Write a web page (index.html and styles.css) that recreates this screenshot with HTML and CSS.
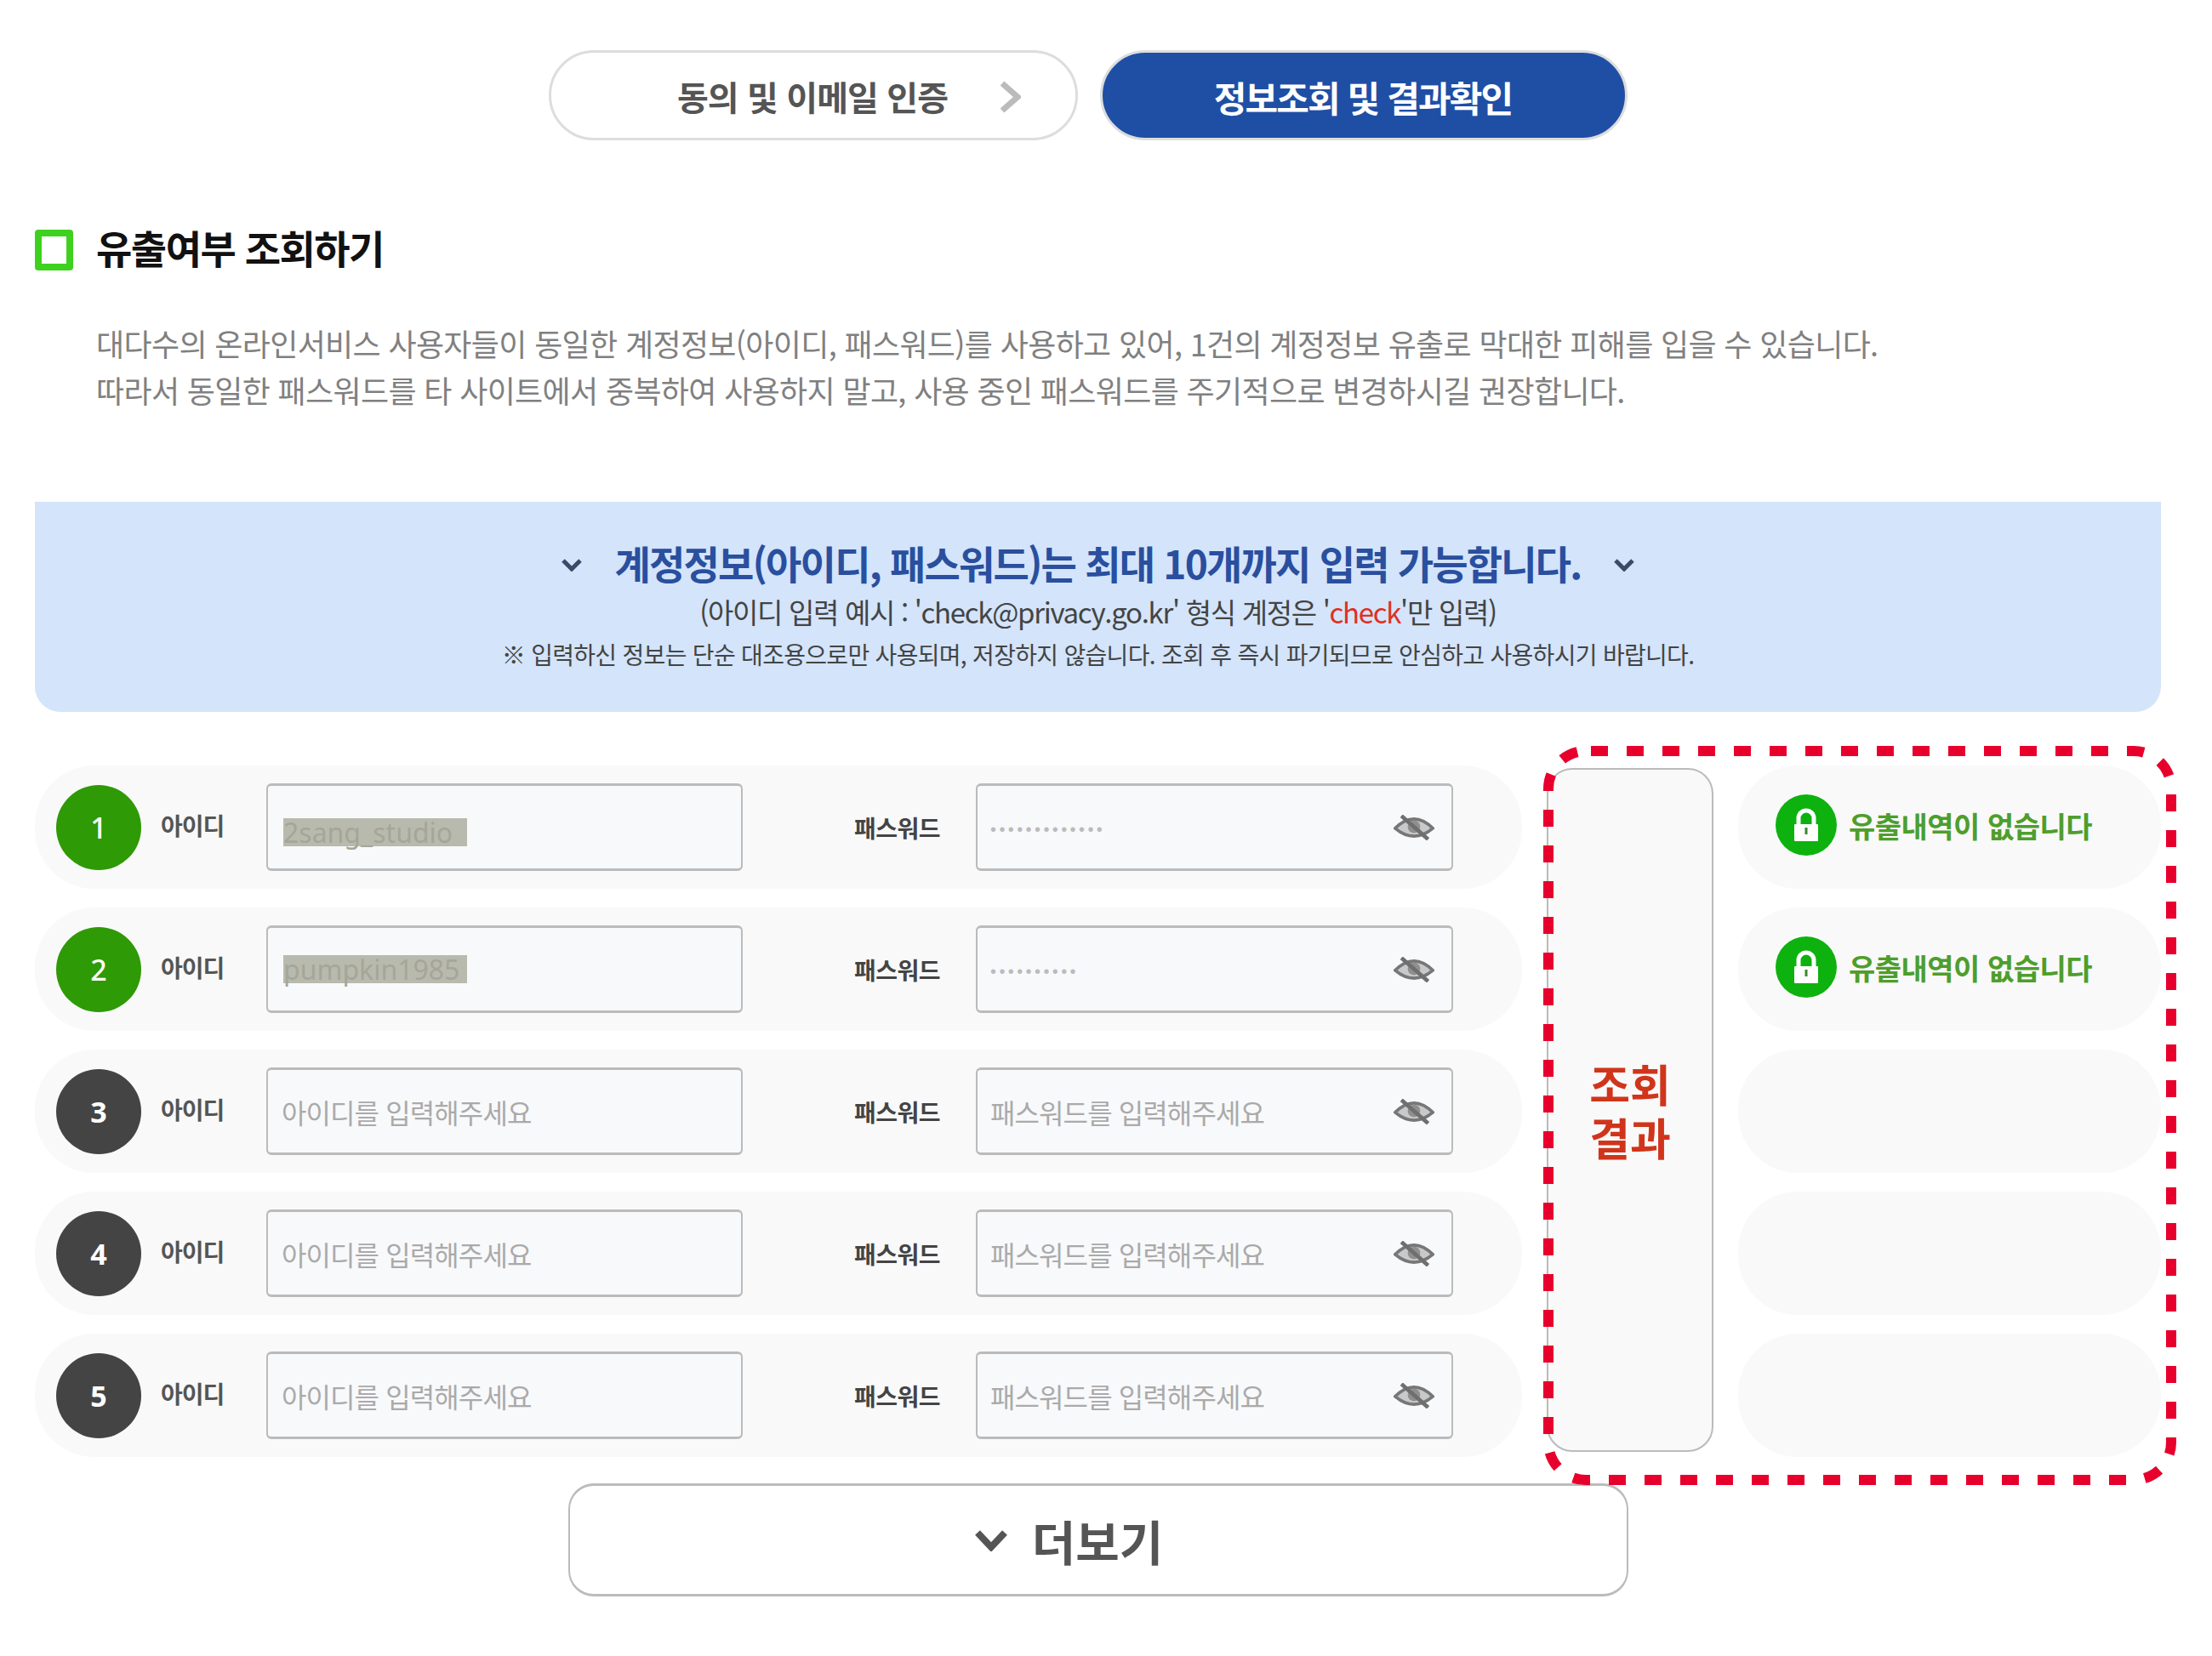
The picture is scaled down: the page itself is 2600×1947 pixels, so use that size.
FILE: index.html
```html
<!DOCTYPE html>
<html lang="ko">
<head>
    <meta charset="UTF-8">
    <title>유출여부 조회하기</title>
    <link rel="stylesheet" href="styles.css">
</head>
<body>
    <div class="steps">
        <div class="step">
            <span>동의 및 이메일 인증</span>
            <svg class="step-arrow" viewBox="0 0 26 38"><path d="M4 3 L22 19 L4 35"/></svg>
        </div>
        <div class="step step-active"><span>정보조회 및 결과확인</span></div>
    </div>

    <div class="section-title">
        <i class="title-mark"></i>
        <h2>유출여부 조회하기</h2>
    </div>
    <p class="desc">대다수의 온라인서비스 사용자들이 동일한 계정정보(아이디, 패스워드)를 사용하고 있어, 1건의 계정정보 유출로 막대한 피해를 입을 수 있습니다.<br>따라서 동일한 패스워드를 타 사이트에서 중복하여 사용하지 말고, 사용 중인 패스워드를 주기적으로 변경하시길 권장합니다.</p>

    <div class="notice">
        <div class="notice-title">
            <svg class="notice-arrow" viewBox="0 0 26 16"><path d="M3 3 L13 13 L23 3"/></svg>
            <strong>계정정보(아이디, 패스워드)는 최대 10개까지 입력 가능합니다.</strong>
            <svg class="notice-arrow" viewBox="0 0 26 16"><path d="M3 3 L13 13 L23 3"/></svg>
        </div>
        <p class="notice-sub">(아이디 입력 예시 : 'check@privacy.go.kr' 형식 계정은 '<em>check</em>'만 입력)</p>
        <p class="notice-note">※ 입력하신 정보는 단순 대조용으로만 사용되며, 저장하지 않습니다. 조회 후 즉시 파기되므로 안심하고 사용하시기 바랍니다.</p>
    </div>

    <div class="lookup">
        <div class="account-list">
            <div class="account-row">
                <span class="num num-done">1</span>
                <label class="id-label">아이디</label>
                <div class="field id-field"><span class="masked masked-low">2sang_studio</span></div>
                <label class="pw-label">패스워드</label>
                <div class="field pw-field">
                    <span class="dots">•••••••••••••</span>
                    <svg class="eye" viewBox="0 0 52 32"><use href="#eye-off"/></svg>
                </div>
            </div>
            <div class="account-row">
                <span class="num num-done">2</span>
                <label class="id-label">아이디</label>
                <div class="field id-field"><span class="masked">pumpkin1985</span></div>
                <label class="pw-label">패스워드</label>
                <div class="field pw-field">
                    <span class="dots">••••••••••</span>
                    <svg class="eye" viewBox="0 0 52 32"><use href="#eye-off"/></svg>
                </div>
            </div>
            <div class="account-row">
                <span class="num">3</span>
                <label class="id-label">아이디</label>
                <div class="field id-field"><span class="holder">아이디를 입력해주세요</span></div>
                <label class="pw-label">패스워드</label>
                <div class="field pw-field">
                    <span class="holder">패스워드를 입력해주세요</span>
                    <svg class="eye" viewBox="0 0 52 32"><use href="#eye-off"/></svg>
                </div>
            </div>
            <div class="account-row">
                <span class="num">4</span>
                <label class="id-label">아이디</label>
                <div class="field id-field"><span class="holder">아이디를 입력해주세요</span></div>
                <label class="pw-label">패스워드</label>
                <div class="field pw-field">
                    <span class="holder">패스워드를 입력해주세요</span>
                    <svg class="eye" viewBox="0 0 52 32"><use href="#eye-off"/></svg>
                </div>
            </div>
            <div class="account-row">
                <span class="num">5</span>
                <label class="id-label">아이디</label>
                <div class="field id-field"><span class="holder">아이디를 입력해주세요</span></div>
                <label class="pw-label">패스워드</label>
                <div class="field pw-field">
                    <span class="holder">패스워드를 입력해주세요</span>
                    <svg class="eye" viewBox="0 0 52 32"><use href="#eye-off"/></svg>
                </div>
            </div>
        </div>

        <div class="result-head">조회<br>결과</div>

        <div class="result-list">
            <div class="result-row">
                <svg class="lock" viewBox="0 0 72 72"><use href="#lock-ok"/></svg>
                <span>유출내역이 없습니다</span>
            </div>
            <div class="result-row">
                <svg class="lock" viewBox="0 0 72 72"><use href="#lock-ok"/></svg>
                <span>유출내역이 없습니다</span>
            </div>
            <div class="result-row"></div>
            <div class="result-row"></div>
            <div class="result-row"></div>
        </div>

        <!-- red dashed callout over the result columns -->
        <svg class="callout" viewBox="0 0 744 869"><rect x="6" y="6" width="732" height="857" rx="44" ry="44"/></svg>
    </div>

    <div class="more-btn">
        <svg class="more-arrow" viewBox="0 0 40 26"><path d="M4 4 L20 21 L36 4"/></svg>
        <span>더보기</span>
    </div>

    <svg class="defs" width="0" height="0">
        <defs>
            <g id="eye-off">
                <path d="M2 17 Q26 -7 50 17 Q26 37 2 17 Z" fill="#c9c9c9" stroke="#777" stroke-width="4"/>
                <circle cx="26" cy="15" r="8" fill="#8f8f8f"/>
                <path d="M10 1 L44 31" stroke="#6f6f6f" stroke-width="5"/>
            </g>
            <g id="lock-ok">
                <circle cx="36" cy="36" r="36" fill="#0db20f"/>
                <path d="M27 36 V28 A9 9 0 0 1 45 28 V36" fill="none" stroke="#fff" stroke-width="5"/>
                <rect x="22" y="35" width="28" height="20" rx="1" fill="#fff"/>
                <rect x="34.5" y="39" width="3" height="8" fill="#3b8a2e"/>
            </g>
        </defs>
    </svg>
</body>
</html>
```
FILE: styles.css
```css
* {
    box-sizing: border-box;
    margin: 0;
    padding: 0;
}

body {
    width: 2600px;
    height: 1947px;
    overflow: hidden;
    background: #fff;
    font-family: "Noto Sans CJK KR", "Noto Sans", sans-serif;
    color: #444;
}

.steps {
    display: flex;
    gap: 26px;
    margin: 59px 0 0 645px;
}

.step {
    position: relative;
    display: flex;
    align-items: center;
    justify-content: center;
    width: 622px;
    height: 106px;
    padding: 2px 2px 0 0;
    border: 3px solid #ddd;
    border-radius: 53px;
    font-size: 40px;
    font-weight: 700;
    letter-spacing: -0.9px;
    color: #555;
}

.step-active {
    width: 620px;
    background: #1f4fa5;
    color: #fff;
    font-size: 42px;
    letter-spacing: -1.9px;
}

.step-arrow {
    position: absolute;
    left: 526px;
    top: 33px;
    width: 26px;
    height: 38px;
}

.step-arrow path {
    fill: none;
    stroke: #bbb;
    stroke-width: 7;
}

.section-title {
    display: flex;
    align-items: center;
    gap: 27px;
    height: 48px;
    margin: 105px 0 0 41px;
}

.title-mark {
    width: 45px;
    height: 48px;
    border: 8px solid #3fd11f;
    border-radius: 4px;
}

.section-title h2 {
    margin-top: -8px;
    font-size: 46px;
    letter-spacing: -1.5px;
    color: #111;
}

.desc {
    margin: 58px 0 0 113px;
    font-size: 36px;
    line-height: 55px;
    letter-spacing: -0.66px;
    color: #808080;
    white-space: nowrap;
}

.notice {
    width: 2499px;
    height: 247px;
    margin: 104px 0 0 41px;
    padding-top: 35px;
    background: #d3e4fb;
    border-radius: 0 0 30px 30px;
    text-align: center;
}

.notice-title {
    display: flex;
    align-items: center;
    justify-content: center;
    gap: 37px;
    height: 72px;
}

.notice-title strong {
    font-size: 46px;
    letter-spacing: -1.8px;
    color: #2a4f9e;
}

.notice-arrow {
    width: 26px;
    height: 16px;
    margin-top: 6px;
}

.notice-arrow path {
    fill: none;
    stroke: #3b4a66;
    stroke-width: 5;
}

.notice-sub {
    height: 44px;
    font-size: 33px;
    line-height: 45px;
    letter-spacing: -1.33px;
    color: #444;
}

.notice-sub em {
    font-style: normal;
    color: #e0301e;
}

.notice-note {
    height: 56px;
    font-size: 28px;
    line-height: 56px;
    letter-spacing: -0.7px;
    color: #444;
}

.lookup {
    position: relative;
    display: flex;
    gap: 29px;
    margin: 63px 0 0 41px;
}

.account-list,
.result-list {
    display: flex;
    flex-direction: column;
    gap: 22px;
}

.account-row {
    display: flex;
    align-items: center;
    width: 1748px;
    height: 145px;
    padding-left: 25px;
    background: #f9f9f9;
    border-radius: 70px;
}

.num {
    display: flex;
    align-items: center;
    justify-content: center;
    width: 100px;
    height: 100px;
    margin-right: 23px;
    background: #444;
    border-radius: 50%;
    font-family: "Noto Sans", sans-serif;
    font-size: 34px;
    font-weight: 700;
    color: #fff;
}

.num-done {
    background: #2e9a05;
    font-weight: 500;
}

.id-label {
    width: 124px;
    margin-top: -5px;
    font-size: 28px;
    font-weight: 700;
    letter-spacing: -1px;
    color: #555;
}

.pw-label {
    width: 232px;
    margin-right: 42px;
    text-align: right;
    font-size: 28px;
    font-weight: 700;
    letter-spacing: -0.5px;
    color: #444;
}

.field {
    position: relative;
    display: flex;
    align-items: center;
    height: 103px;
    background: #f8f9fb;
    border: 2px solid #bbb;
    border-top-width: 3px;
    border-bottom-width: 3px;
    border-radius: 6px;
}

.id-field {
    width: 560px;
    padding-left: 16px;
}

.pw-field {
    width: 561px;
    padding-left: 15px;
}

.holder {
    font-size: 32px;
    letter-spacing: -0.9px;
    color: #aaa;
}

.masked {
    width: 216px;
    height: 33px;
    margin-left: 2px;
    background: #b9baae;
    font-family: "Noto Sans", sans-serif;
    font-size: 32px;
    line-height: 33px;
    white-space: nowrap;
    color: #a5a698;
}

.masked-low {
    margin-top: 12px;
}

.dots {
    margin-top: 5px;
    font-family: "Liberation Sans", sans-serif;
    font-size: 20px;
    letter-spacing: 3.4px;
    color: #bbb;
}

.eye {
    position: absolute;
    right: 20px;
    top: 34px;
    width: 48px;
    height: 30px;
}

.result-head {
    display: flex;
    align-items: center;
    justify-content: center;
    width: 196px;
    height: 804px;
    margin-top: 3px;
    background: #f9f9f9;
    border: 2px solid #bbb;
    border-radius: 30px;
    text-align: center;
    font-size: 52px;
    font-weight: 700;
    line-height: 63px;
    color: #d0351b;
}

.result-row {
    display: flex;
    align-items: center;
    gap: 14px;
    width: 497px;
    height: 145px;
    padding: 0 0 5px 44px;
    background: #f9f9f9;
    border-radius: 70px;
    font-size: 34px;
    font-weight: 700;
    letter-spacing: -0.5px;
    color: #4e9e2c;
}

.lock {
    width: 72px;
    height: 72px;
}

.callout {
    position: absolute;
    left: 1773px;
    top: -23px;
    width: 744px;
    height: 869px;
    pointer-events: none;
}

.callout rect {
    fill: none;
    stroke: #e8002d;
    stroke-width: 12;
    stroke-dasharray: 20 22;
    stroke-dashoffset: -6;
}

.more-btn {
    display: flex;
    align-items: center;
    justify-content: center;
    gap: 28px;
    width: 1246px;
    height: 133px;
    margin: 31px 0 0 668px;
    padding-right: 70px;
    background: #fff;
    border: 2px solid #bbb;
    border-top-width: 3px;
    border-bottom-width: 3px;
    border-radius: 30px;
    font-size: 56px;
    font-weight: 700;
    color: #555;
}

.more-arrow {
    width: 40px;
    height: 26px;
}

.more-arrow path {
    fill: none;
    stroke: #555;
    stroke-width: 8;
}

.defs {
    position: absolute;
}
```
